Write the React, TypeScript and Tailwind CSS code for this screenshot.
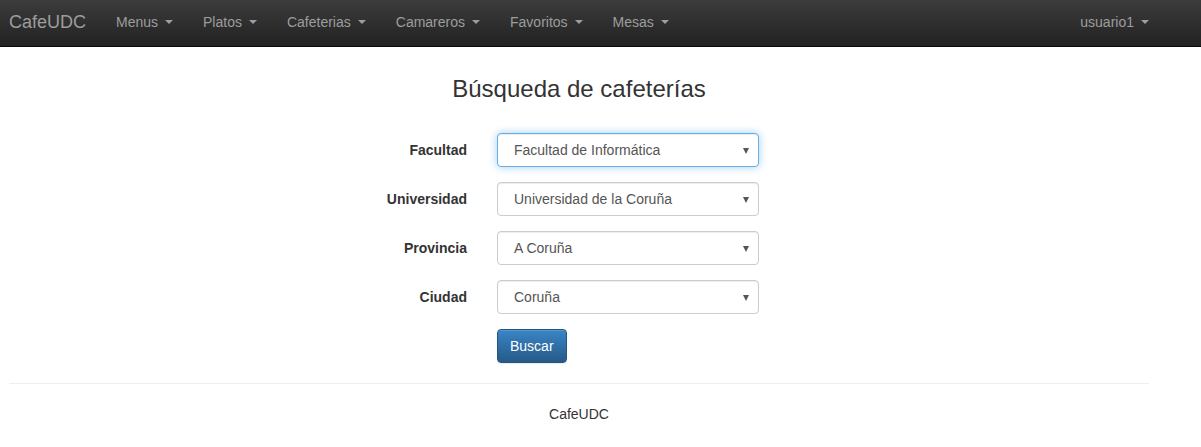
import React from "react";

const navItems = ["Menus", "Platos", "Cafeterias", "Camareros", "Favoritos", "Mesas"];

const fields = [
  { label: "Facultad", value: "Facultad de Informática", focus: true },
  { label: "Universidad", value: "Universidad de la Coruña" },
  { label: "Provincia", value: "A Coruña" },
  { label: "Ciudad", value: "Coruña" },
];

function Caret({ className = "" }: { className?: string }) {
  return (
    <span
      className={
        "inline-block w-0 h-0 ml-[7px] align-middle border-x-[4px] border-x-transparent border-t-[4px] " +
        className
      }
    />
  );
}

function NavLink({ text }: { text: string }) {
  return (
    <a href="#" className="flex items-center px-[15px] text-[14px] text-[#9d9d9d] hover:text-white">
      {text}
      <Caret className="border-t-[#9d9d9d]" />
    </a>
  );
}

function SelectRow({ label, value, focus }: { label: string; value: string; focus?: boolean }) {
  return (
    <div className="flex items-center mb-[15px]">
      <label className="w-[488px] pr-[15px] text-right font-bold text-[14px] text-[#333]">{label}</label>
      <div className="w-[292px] px-[15px]">
        <div
          className={
            "relative h-[34px] flex items-center pl-[16px] pr-[24px] rounded-[4px] border bg-white text-[14px] text-[#555] " +
            (focus
              ? "border-[#66afe9] shadow-[inset_0_1px_1px_rgba(0,0,0,0.075),0_0_8px_rgba(102,175,233,0.6)]"
              : "border-[#ccc] shadow-[inset_0_1px_1px_rgba(0,0,0,0.075)]")
          }
        >
          {value}
          <span className="absolute right-[9px] top-[14px] w-0 h-0 border-x-[3.5px] border-x-transparent border-t-[6px] border-t-[#555]" />
        </div>
      </div>
    </div>
  );
}

export default function App() {
  return (
    <div className="min-h-[447px] bg-white font-['Liberation_Sans',Arial,sans-serif] overflow-hidden">
      {/* navbar */}
      <nav className="h-[47px] bg-gradient-to-b from-[#3c3c3c] to-[#222] border-b border-[#080808]">
        <div className="ml-[-6px] w-[1170px] h-[46px] flex items-stretch justify-between pb-[2px]">
          <div className="flex items-stretch">
            <a href="#" className="flex items-center px-[15px] text-[18px] text-[#9d9d9d] w-[107px]">
              CafeUDC
            </a>
            {navItems.map((item) => (
              <NavLink key={item} text={item} />
            ))}
          </div>
          <div className="flex items-stretch">
            <NavLink text="usuario1" />
          </div>
        </div>
      </nav>

      {/* contenido */}
      <div className="ml-[9px] w-[1140px]">
        <h3 className="pt-[29px] text-center text-[24px] leading-[26.4px] text-[#333]">Búsqueda de cafeterías</h3>

        <form className="mt-[31px] ml-[-15px]">
          {fields.map((f) => (
            <SelectRow key={f.label} label={f.label} value={f.value} focus={f.focus} />
          ))}
          <div className="flex">
            <div className="w-[488px]" />
            <div className="px-[15px]">
              <button
                type="button"
                className="h-[34px] px-[12px] rounded-[4px] border border-[#245580] bg-gradient-to-b from-[#3a85c6] to-[#265a88] text-white text-[14px] shadow-[inset_0_1px_0_rgba(255,255,255,0.15),0_1px_1px_rgba(0,0,0,0.075)]"
              >
                Buscar
              </button>
            </div>
          </div>
        </form>

        {/* footer */}
        <hr className="mt-[20px] border-t border-[#eee]" />
        <footer className="pt-[20px] text-center text-[14px] leading-[20px] text-[#333]">CafeUDC</footer>
      </div>
    </div>
  );
}
